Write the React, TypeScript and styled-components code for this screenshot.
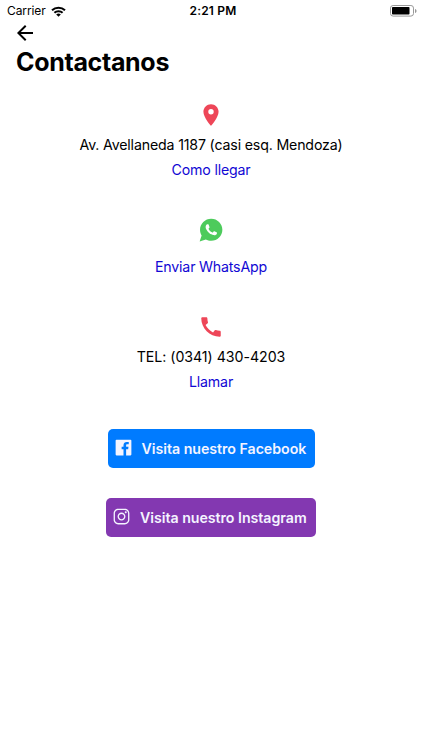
import React from "react";
import styled, { createGlobalStyle } from "styled-components";
import { IoLogoWhatsapp, IoLogoFacebook, IoLogoInstagram } from "react-icons/io";
import { MdArrowBack, MdPlace, MdCall } from "react-icons/md";

const GlobalStyle = createGlobalStyle`
  * { box-sizing: border-box; }
  body { margin: 0; background: #fff; }
`;

const Screen = styled.main`
  width: 422px;
  height: 750px;
  display: flex;
  flex-direction: column;
  background: #fff;
  color: #000;
  font-family: Inter, "Liberation Sans", sans-serif;
  overflow: hidden;
`;

const StatusBar = styled.div`
  height: 22px;
  padding: 0 5px 0 7px;
  display: grid;
  grid-template-columns: 1fr auto 1fr;
  align-items: center;
  font-size: 12px;
  line-height: 22px;
  flex-shrink: 0;
`;

const Carrier = styled.div`
  display: flex;
  align-items: center;
  gap: 5px;
  letter-spacing: -0.1px;
`;

const Clock = styled.div`
  font-weight: 600;
  letter-spacing: 0.2px;
  padding-left: 2px;
`;

const BatterySlot = styled.div`
  display: flex;
  justify-content: flex-end;
`;

const Header = styled.header`
  height: 63px;
  padding: 0 16px;
  display: flex;
  flex-direction: column;
  flex-shrink: 0;
`;

const BackButton = styled.button`
  width: 24px;
  height: 24px;
  margin: -1px 0 0 -3.5px;
  padding: 0;
  border: 0;
  background: none;
  color: #000;
  display: flex;
`;

const Title = styled.h1`
  margin: 1px 0 0;
  font-size: 25px;
  line-height: 33px;
  font-weight: 700;
  letter-spacing: -0.32px;
`;

const Contact = styled.section<{ $height: number; $gap: number; $top?: number }>`
  height: ${(p) => p.$height}px;
  padding-top: ${(p) => p.$top ?? 0}px;
  display: flex;
  flex-direction: column;
  align-items: center;
  flex-shrink: 0;

  > svg {
    margin-bottom: ${(p) => p.$gap}px;
    flex-shrink: 0;
  }
`;

const Line = styled.div<{ $tracking?: number }>`
  font-size: 14.2px;
  line-height: 25px;
  letter-spacing: ${(p) => p.$tracking ?? -0.17}px;
  white-space: nowrap;
`;

const ActionLink = styled(Line).attrs({ as: "a" })`
  color: #1208d4;
`;

const SocialButton = styled.button<{ $color: string; $width: number }>`
  width: ${(p) => p.$width}px;
  height: 39px;
  margin: 0 auto 30px;
  padding: 0 0 0 6px;
  border: 0;
  border-radius: 5px;
  display: flex;
  align-items: center;
  flex-shrink: 0;
  gap: 8px;
  background: ${(p) => p.$color};
  color: #f4f4ff;
  font-family: inherit;
  font-size: 14.2px;
  font-weight: 600;
  letter-spacing: -0.03px;
  white-space: nowrap;

  > svg {
    margin: -2px 0 0 -1px;
    width: 21px;
    height: 21px;
    flex-shrink: 0;
  }
`;

const WifiIcon = () => (
  <svg width="15" height="11" viewBox="0 0 15 11" fill="none" stroke="#000" strokeWidth="2">
    <path d="M1 4.300a9.300 9.300 0 0 1 13 0" />
    <path d="M3.400 6.800a5.900 5.900 0 0 1 8.200 0" />
    <path d="M7.500 10.800 5.200 8.500a3.300 3.300 0 0 1 4.600 0z" fill="#000" stroke="none" />
  </svg>
);

const BatteryIcon = () => (
  <svg width="27" height="12" viewBox="0 0 27 12">
    <rect x="0.5" y="0.5" width="23" height="10.6" rx="2.6" fill="#fff" stroke="#999" />
    <rect x="2" y="2" width="17.5" height="7.6" rx="0.8" fill="#000" />
    <path d="M25 4v4c1-.4 1.500-1 1.500-2S26 4.400 25 4z" fill="#999" />
  </svg>
);

export default function App() {
  return (
    <>
      <GlobalStyle />
      <Screen>
        <StatusBar>
          <Carrier>
            Carrier
            <WifiIcon />
          </Carrier>
          <Clock>2:21 PM</Clock>
          <BatterySlot>
            <BatteryIcon />
          </BatterySlot>
        </StatusBar>
        <Header>
          <BackButton aria-label="Volver">
            <MdArrowBack size={24} />
          </BackButton>
          <Title>Contactanos</Title>
        </Header>
        <Contact $height={132} $gap={4} $top={17}>
          <MdPlace size={26} color="#ee4658" />
          <Line>Av. Avellaneda 1187 (casi esq. Mendoza)</Line>
          <ActionLink>Como llegar</ActionLink>
        </Contact>
        <Contact $height={97} $gap={11}>
          <IoLogoWhatsapp size={26} color="#4dcb5c" />
          <ActionLink $tracking={-0.2}>Enviar WhatsApp</ActionLink>
        </Contact>
        <Contact $height={115} $gap={4}>
          <MdCall size={26} color="#ee4658" />
          <Line $tracking={-0.04}>TEL: (0341) 430-4203</Line>
          <ActionLink>Llamar</ActionLink>
        </Contact>
        <SocialButton $color="#007bff" $width={207}>
          <IoLogoFacebook />
          Visita nuestro Facebook
        </SocialButton>
        <SocialButton $color="#8338b1" $width={210}>
          <IoLogoInstagram />
          Visita nuestro Instagram
        </SocialButton>
      </Screen>
    </>
  );
}
